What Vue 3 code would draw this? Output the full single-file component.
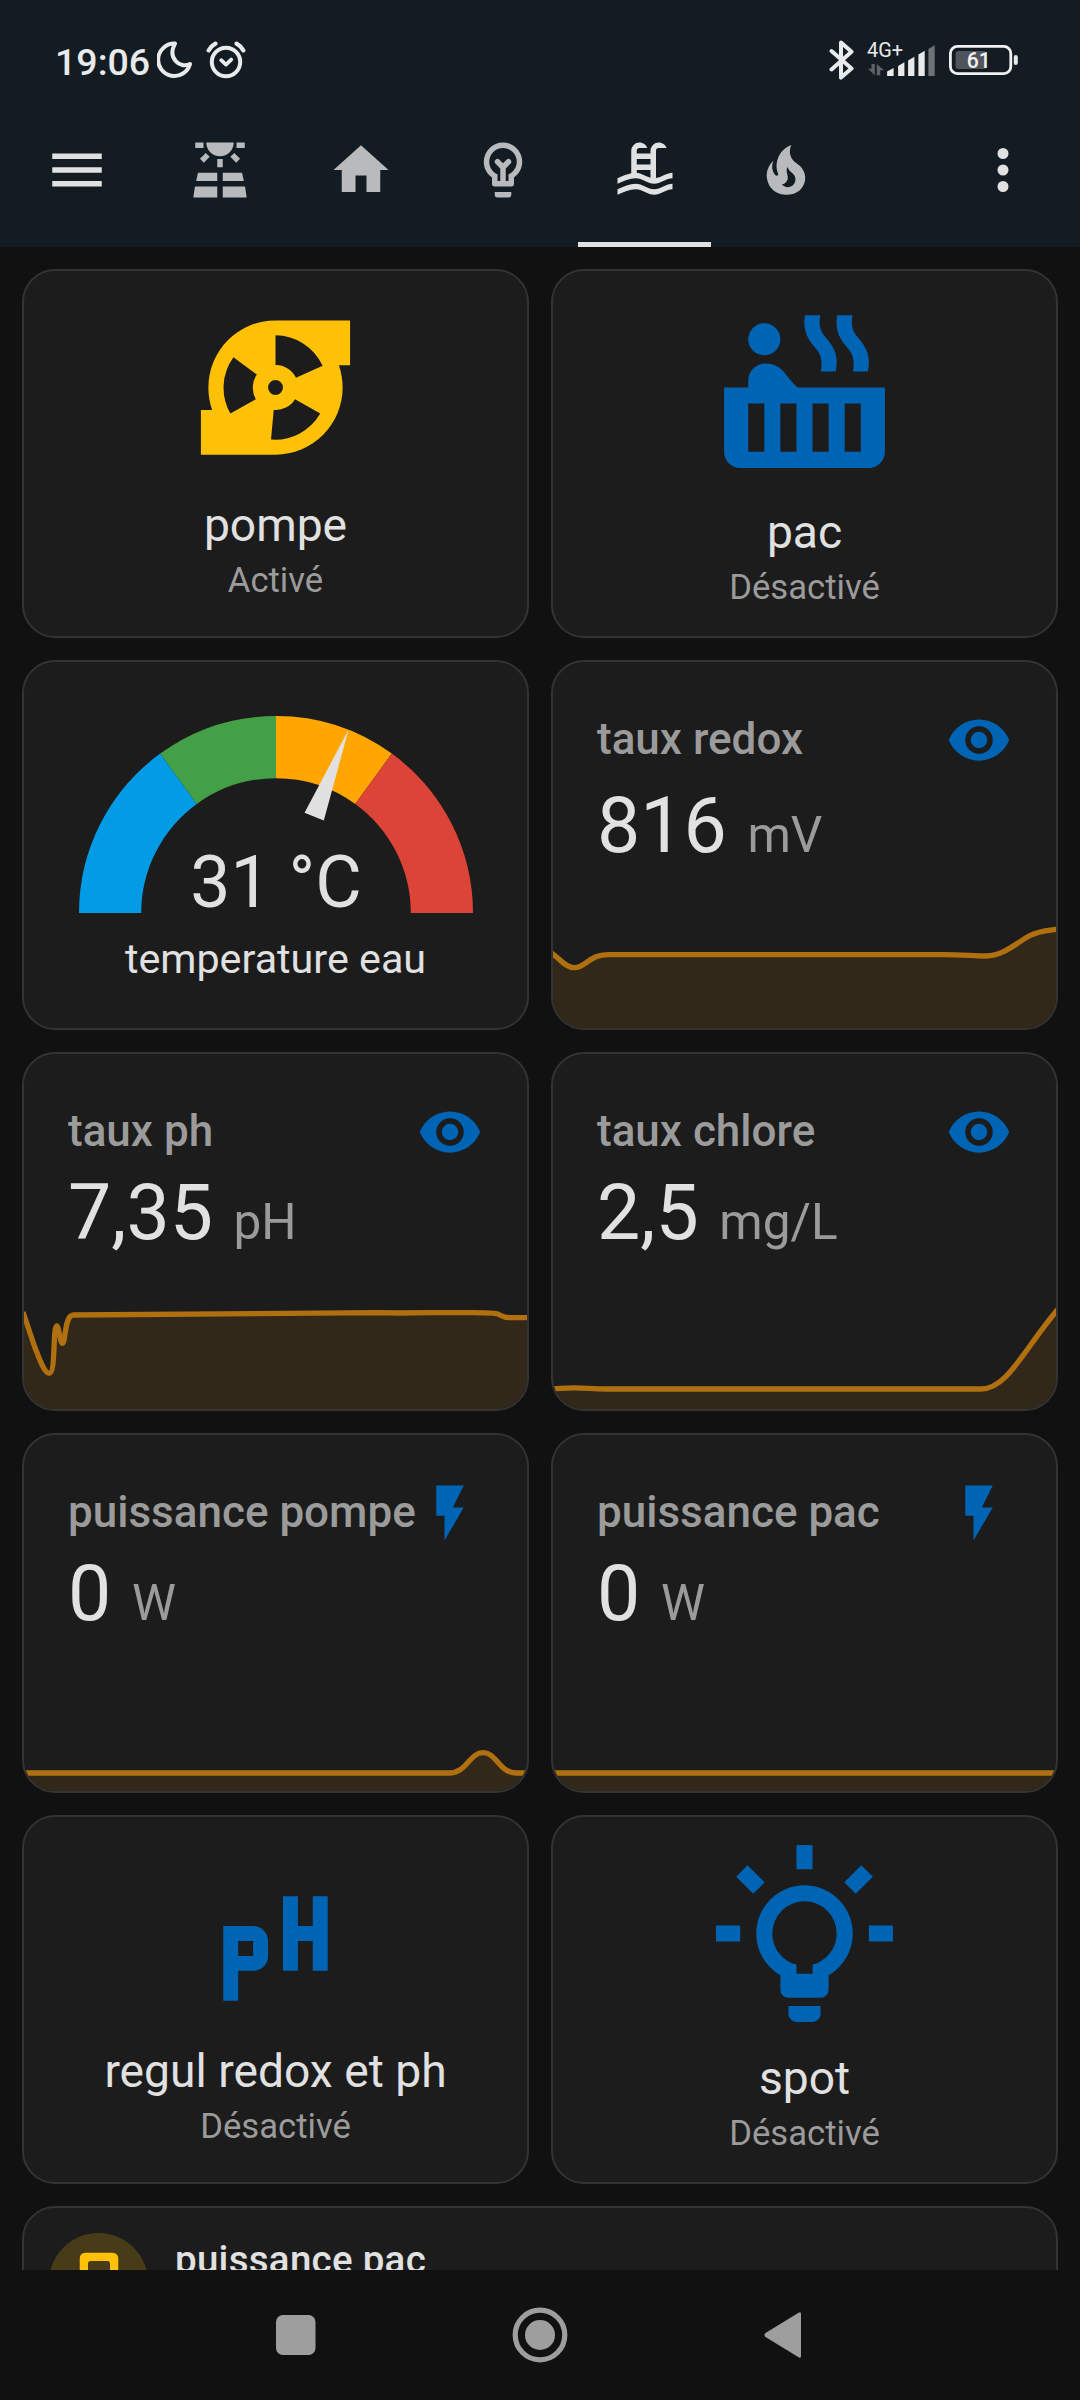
<script setup>
const icons = {
  menu: 'M3,6H21V8H3V6M3,11H21V13H3V11M3,16H21V18H3V16Z',
  solar: 'M3.33 16H11V13H4L3.33 16M13 16H20.67L20 13H13V16M21.11 18H13V22H21.7L21.11 18M2.3 22H11V18H2.89L2.3 22M11 8H13V11H11V8M15.76 7.21L17.18 5.79L19.3 7.91L17.89 9.33L15.76 7.21M4.71 7.91L6.83 5.79L8.24 7.21L6.12 9.33L4.71 7.91M3 2H6V4H3V2M18 2H21V4H18V2M12 7C14.76 7 17 4.76 17 2H7C7 4.76 9.24 7 12 7Z',
  home: 'M10,20V14H14V20H19V12H22L12,3L2,12H5V20H10Z',
  bulb: 'M12,2A7,7 0 0,1 19,9C19,11.38 17.81,13.47 16,14.74V17A1,1 0 0,1 15,18H9A1,1 0 0,1 8,17V14.74C6.19,13.47 5,11.38 5,9A7,7 0 0,1 12,2M9,20H15V21A1,1 0 0,1 14,22H10A1,1 0 0,1 9,21V20M12,4A5,5 0 0,0 7,9C7,11.05 8.23,12.81 10,13.58V16H11V11.42L9.29,9.71A1,1 0 0,1 10.71,8.29L12,9.59L13.29,8.29A1,1 0 0,1 14.71,9.71L13,11.42V16H14V13.58C15.77,12.81 17,11.05 17,9A5,5 0 0,0 12,4Z',
  pool: 'M2,15C3.67,14.25 5.33,13.5 7,13.17V5A3,3 0 0,1 10,2C11.31,2 12.42,2.83 12.83,4H10A1,1 0 0,0 9,5V6H14V5A3,3 0 0,1 17,2C18.31,2 19.42,2.83 19.83,4H17A1,1 0 0,0 16,5V14.94C18,14.62 20,13 22,13V15C19.78,15 17.56,17 15.33,17C13.11,17 10.89,15 8.67,15C6.44,15 4.22,16 2,17V15M14,8H9V10H14V8M14,12H9V13C10.67,13.16 12.33,14.31 14,14.79V12M2,19C4.22,18 6.44,17 8.67,17C10.89,17 13.11,19 15.33,19C17.56,19 19.78,17 22,17V19C19.78,19 17.56,21 15.33,21C13.11,21 10.89,19 8.67,19C6.44,19 4.22,20 2,21V19Z',
  fire: 'M17.66 11.2C17.43 10.9 17.15 10.64 16.89 10.38C16.22 9.78 15.46 9.35 14.82 8.72C13.33 7.26 13 4.85 13.95 3C13 3.23 12.17 3.75 11.46 4.32C8.87 6.4 7.85 10.07 9.07 13.22C9.11 13.32 9.15 13.42 9.15 13.55C9.15 13.77 9 13.97 8.8 14.05C8.57 14.15 8.33 14.09 8.14 13.93C8.08 13.88 8.04 13.83 8 13.76C6.87 12.33 6.69 10.28 7.45 8.64C5.78 10 4.87 12.3 5 14.47C5.06 14.97 5.12 15.47 5.29 15.97C5.43 16.57 5.7 17.17 6 17.7C7.08 19.43 8.95 20.67 10.96 20.92C13.1 21.19 15.39 20.8 17.03 19.32C18.86 17.66 19.5 15 18.56 12.72L18.43 12.46C18.22 12 17.66 11.2 17.66 11.2M14.5 17.5C14.22 17.74 13.76 18 13.4 18.1C12.28 18.5 11.16 17.94 10.5 17.28C11.69 17 12.4 16.12 12.61 15.23C12.78 14.43 12.46 13.77 12.33 13C12.21 12.26 12.23 11.63 12.5 10.94C12.69 11.32 12.89 11.7 13.13 12C13.9 13 15.11 13.44 15.37 14.8C15.41 14.94 15.43 15.08 15.43 15.23C15.46 16.05 15.1 16.95 14.5 17.5Z',
  dots: 'M12,16A2,2 0 0,1 14,18A2,2 0 0,1 12,20A2,2 0 0,1 10,18A2,2 0 0,1 12,16M12,10A2,2 0 0,1 14,12A2,2 0 0,1 12,14A2,2 0 0,1 10,12A2,2 0 0,1 12,10M12,4A2,2 0 0,1 14,6A2,2 0 0,1 12,8A2,2 0 0,1 10,6A2,2 0 0,1 12,4Z',
  pump: 'M2 21V15H3.5C3.18 14.06 3 13.05 3 12A9 9 0 0 1 12 3H22V9H20.5C20.82 9.94 21 10.95 21 12A9 9 0 0 1 12 21H2M12 5V9A3 3 0 0 1 14.75 10.7L18.32 9.09A7 7 0 0 0 12 5M14.62 13.56A3 3 0 0 1 11.76 15L11.4 18.97A7 7 0 0 0 18 15.5L14.62 13.56M9.36 13.56A3.1 3.1 0 0 1 9.5 10.26L6.36 7.94A7 7 0 0 0 5.95 15.5L9.36 13.56M12 11A1 1 0 1 0 12 13A1 1 0 0 0 12 11Z',
  hotTub: 'M7 4A2 2 0 1 1 7 8A2 2 0 0 1 7 4M2 12H5V11.2C5 9.9 6 9 7.2 9C8.1 9 8.8 9.35 9.4 10C9.9 10.7 10.4 11.3 11.15 12H22V20A2 2 0 0 1 20 22H4A2 2 0 0 1 2 20V12M5 14V20H7V14H5M9 14V20H11V14H9M13 14V20H15V14H13M17 14V20H19V14H17M12.05 3H13.96C13.75 4.3 13.95 5 14.7 5.85C15.85 7.2 16.25 8.3 15.87 10H14.05C14.25 8.4 14 7.8 13.2 6.9C12.2 5.7 11.8 4.6 12.05 3M16.05 3H17.96C17.75 4.3 17.95 5 18.7 5.85C19.85 7.2 20.25 8.3 19.87 10H18.05C18.25 8.4 18 7.8 17.2 6.9C16.2 5.7 15.8 4.6 16.05 3Z',
  ph: 'M5 11H9A2 2 0 0 1 11 13V15A2 2 0 0 1 9 17H7V21H5V11M7 13V15H9V13H7M13 7H15V11H17V7H19V17H17V13H15V17H13V7Z',
  spot: 'M20,11H23V13H20V11M1,11H4V13H1V11M13,1V4H11V1H13M4.92,3.5L7.05,5.64L5.63,7.05L3.5,4.93L4.92,3.5M16.95,5.63L19.07,3.5L20.5,4.93L18.37,7.05L16.95,5.63M12,6A6,6 0 0,1 18,12C18,14.22 16.79,16.16 15,17.2V19A1,1 0 0,1 14,20H10A1,1 0 0,1 9,19V17.2C7.21,16.16 6,14.22 6,12A6,6 0 0,1 12,6M14,21V22A1,1 0 0,1 13,23H11A1,1 0 0,1 10,22V21H14M11,17H13V15.87C14.73,15.43 16,13.86 16,12A4,4 0 0,0 12,8A4,4 0 0,0 8,12C8,13.86 9.27,15.43 11,15.87V17Z',
  eye: 'M12,9A3,3 0 0,0 9,12A3,3 0 0,0 12,15A3,3 0 0,0 15,12A3,3 0 0,0 12,9M12,17A5,5 0 0,1 7,12A5,5 0 0,1 12,7A5,5 0 0,1 17,12A5,5 0 0,1 12,17M12,4.5C7,4.5 2.73,7.61 1,12C2.73,16.39 7,19.5 12,19.5C17,19.5 21.27,16.39 23,12C21.27,7.61 17,4.5 12,4.5Z',
  flash: 'M7,2V13H10V22L17,10H13L17,2H7Z',
  meter: 'M7 1H17A2 2 0 0 1 19 3V21H5V3A2 2 0 0 1 7 1M9 4A1 1 0 0 0 8 5V16H16V5A1 1 0 0 0 15 4H9Z'
}

const tabs = ['solar', 'home', 'bulb', 'pool', 'fire']

const cards = [
  { type: 'button', icon: 'pump', name: 'pompe', state: 'Activé', on: true },
  { type: 'button', icon: 'hotTub', name: 'pac', state: 'Désactivé', big: true },
  { type: 'gauge', name: 'temperature eau', value: '31 °C' },
  {
    type: 'sensor', icon: 'eye', name: 'taux redox', value: '816', unit: 'mV', low: true,
    line: 'M-2 44.5L0 46C8 52 13 59.7 21.4 59.7C33 59.7 35 46.7 56 46.7H390C410 46.7 420 48 433 48C450 48 465 34 476 28C486 22.8 494 22.5 503 21.3H506'
  },
  {
    type: 'sensor', icon: 'eye', name: 'taux ph', value: '7,35', unit: 'pH',
    line: 'M-1 23L0 26L10.4 57C14 66 20 84.3 25.2 84.3C32 84.3 28.5 37 32.8 37C35 37 36 54.3 38.3 54.3C42 54.3 40 26.5 49.3 26L354.8 23.6L375 24L405 23.6L440 23.6C460 23.8 470 23.6 474 25C478 27 479 28.6 486 28.7H506'
  },
  {
    type: 'sensor', icon: 'eye', name: 'taux chlore', value: '2,5', unit: 'mg/L',
    line: 'M-2 99.7C8 99.4 12 98.9 21.4 98.9C32 98.9 40 100 52.4 100H427.8C454 100 470 62 503 22.5L506 19'
  },
  {
    type: 'sensor', icon: 'flash', name: 'puissance pompe', value: '0', unit: 'W',
    line: 'M-2 102H425C443 102 445 81.7 459.1 81.7C473 81.7 475 102 492.5 102H506'
  },
  { type: 'sensor', icon: 'flash', name: 'puissance pac', value: '0', unit: 'W', line: 'M-2 102H506' },
  { type: 'button', icon: 'ph', name: 'regul redox et ph', state: 'Désactivé' },
  { type: 'button', icon: 'spot', name: 'spot', state: 'Désactivé', big: true }
]

// Gauge segments, in percent of the half circle
const segments = [
  { from: 0, to: 30, color: '#039be5' },
  { from: 30, to: 50, color: '#43a047' },
  { from: 50, to: 70, color: '#ffa600' },
  { from: 70, to: 100, color: '#db4437' }
]
const needleAngle = 111.6

function arc({ from, to }) {
  const point = (p) => {
    const a = (p / 100) * Math.PI
    return `${(-40 * Math.cos(a)).toFixed(3)} ${(-40 * Math.sin(a)).toFixed(3)}`
  }
  return `M${point(from)}A40 40 0 0 1 ${point(to)}`
}
</script>

<template>
  <div class="screen">
    <header class="top">
      <div class="status">
        <div class="status-left">
          <span class="time">19:06</span>
          <svg class="moon" width="36" height="38" viewBox="0 0 36 38">
            <path d="M18 2.6A16.2 16.2 0 1 0 33 23C23 28 10 17 18 2.6Z" fill="none" stroke="#e8eaeb" stroke-width="4" stroke-linejoin="round" />
          </svg>
          <svg class="alarm" width="40" height="38" viewBox="0 0 40 38">
            <g fill="none" stroke="#e8eaeb" stroke-linecap="round" stroke-linejoin="round">
              <circle cx="20" cy="21" r="14.2" stroke-width="4" />
              <path d="M15.2 19.2L20 23.6L25.2 18.6" stroke-width="3.8" />
              <path d="M2.6 9.4Q5 5 9.4 2.6M30.6 2.6Q35 5 37.4 9.4" stroke-width="4.2" />
            </g>
          </svg>
        </div>
        <div class="status-right">
          <svg width="26" height="40" viewBox="0 0 26 40">
            <path d="M2.5 11L22.5 28.5L12 37.6V2.4L22.5 11.7L2.5 29.5" fill="none" stroke="#e8eaeb" stroke-width="4" stroke-linecap="round" stroke-linejoin="round" />
          </svg>
          <svg class="signal" width="70" height="40" viewBox="0 0 70 40">
            <text x="0" y="17" font-size="19.5" textLength="36" lengthAdjust="spacingAndGlyphs" fill="#e8eaeb">4G+</text>
            <g fill="#e8eaeb">
              <path d="M20.1 31.5L26.6 28V36H20.1Z" />
              <path d="M31.1 26L37.4 22.3V36H31.1Z" />
              <path d="M41.1 20.5L47.4 16.7V36H41.1Z" />
              <path d="M51.4 14.5L57.7 10.7V36H51.4Z" />
            </g>
            <path d="M61.4 9L67.7 5.3V36H61.4Z" fill="#6d7276" />
            <path d="M4.5 24H7.8V35.3L1 28.8H4.5ZM9.8 35.3V24L17 30.3H13.2V35.3Z" fill="#5d6367" />
          </svg>
          <svg class="battery" width="72" height="32" viewBox="0 0 72 32">
            <rect x="6.6" y="7" width="30.6" height="18" rx="3" fill="#4f555b" />
            <rect x="1.4" y="2.4" width="60.4" height="27.2" rx="7" fill="none" stroke="#f0f1f2" stroke-width="2.8" />
            <rect x="64.8" y="11" width="4" height="10" rx="2" fill="#e8eaeb" />
            <text x="29.8" y="24.2" font-size="22.5" font-weight="500" text-anchor="middle" textLength="24" lengthAdjust="spacingAndGlyphs" fill="#f0f1f2">61</text>
          </svg>
        </div>
      </div>
      <nav class="toolbar">
        <svg class="icon bright" viewBox="0 0 24 24"><path :d="icons.menu" /></svg>
        <div class="tabs">
          <div v-for="tab in tabs" :key="tab" class="tab" :class="{ active: tab === 'pool' }">
            <svg class="icon" viewBox="0 0 24 24"><path :d="icons[tab]" /></svg>
          </div>
        </div>
        <svg class="icon bright" viewBox="0 0 24 24"><path :d="icons.dots" /></svg>
      </nav>
    </header>

    <main class="content">
      <div class="grid">
        <section v-for="card in cards" :key="card.name" class="card" :class="card.type">
          <template v-if="card.type === 'button'">
            <svg class="button-icon" :class="{ on: card.on, big: card.big }" viewBox="0 0 24 24">
              <path :d="icons[card.icon]" />
            </svg>
            <div class="button-name">{{ card.name }}</div>
            <div class="button-state">{{ card.state }}</div>
          </template>

          <template v-else-if="card.type === 'gauge'">
            <svg class="dial" viewBox="-47.5 -47.5 95 47.5">
              <path v-for="s in segments" :key="s.from" :d="arc(s)" :stroke="s.color" fill="none" stroke-width="15" />
              <path d="M-25 -2.5L-47.5 0L-25 2.5Z" fill="#e1e1e1" :transform="`rotate(${needleAngle})`" />
              <text x="0" y="-1.4" text-anchor="middle" font-size="17.25" fill="#e1e1e1">{{ card.value }}</text>
            </svg>
            <div class="gauge-name">{{ card.name }}</div>
          </template>

          <template v-else>
            <div class="head">
              <span class="sensor-name">{{ card.name }}</span>
              <svg class="icon" viewBox="0 0 24 24"><path :d="icons[card.icon]" /></svg>
            </div>
            <div class="reading" :class="{ low: card.low }">{{ card.value }} <span class="unit">{{ card.unit }}</span></div>
            <svg class="chart" viewBox="0 0 503 120">
              <path class="area" :d="card.line + 'V120H-2Z'" />
              <path class="line" :d="card.line" />
            </svg>
          </template>
        </section>

        <section class="card tile">
          <div class="badge">
            <svg class="icon" viewBox="0 0 24 24"><path :d="icons.meter" /></svg>
          </div>
          <span class="tile-name">puissance pac</span>
        </section>
      </div>
    </main>

    <footer class="navbar">
      <svg width="40" height="40" viewBox="0 0 40 40"><rect width="39.5" height="40" rx="7" /></svg>
      <svg width="56" height="56" viewBox="0 0 56 56">
        <circle cx="28" cy="28" r="24.8" fill="none" stroke="#9e9e9e" stroke-width="5.2" />
        <circle cx="28" cy="28" r="15" />
      </svg>
      <svg width="38" height="46" viewBox="0 0 38 46"><path d="M35 .6Q37 -.5 37 2V44Q37 46.5 35 45.4L1.5 25Q-.5 23 1.5 21Z" /></svg>
    </footer>
  </div>
</template>

<style>
body {
  margin: 0;
  background: #111111;
}
</style>

<style scoped>
.screen {
  width: 1080px;
  height: 2400px;
  display: flex;
  flex-direction: column;
  overflow: hidden;
  background: #111111;
  color: #e1e1e1;
  font-family: Roboto, "Liberation Sans", sans-serif;
}

svg {
  display: block;
  flex: none;
}

.icon {
  width: 66px;
  height: 66px;
  fill: currentColor;
}

.top {
  height: 247px;
  flex: none;
  background: #141c23;
}

.status {
  height: 93px;
  box-sizing: border-box;
  padding: 27px 59px 0 54px;
  display: flex;
  justify-content: space-between;
}

.status-left,
.status-right {
  height: 66px;
  display: flex;
  align-items: center;
}

.time {
  font-size: 37.5px;
  font-weight: 500;
  line-height: 45px;
  padding: 4px 0 0 1px;
  width: 102px;
  color: #e8eaeb;
}

.alarm {
  margin-left: 13px;
}

.signal {
  margin-left: 12px;
}

.battery {
  margin-left: 12px;
}

.toolbar {
  height: 154px;
  display: flex;
  align-items: center;
  padding: 0 44px;
}

.bright {
  color: #e1e1e1;
}

.tabs {
  flex: 1;
  height: 100%;
  display: flex;
  padding-left: 43.5px;
}

.tab {
  flex: none;
  width: 132.8px;
  margin-right: 8.8px;
  height: 100%;
  box-sizing: border-box;
  border-bottom: 5px solid transparent;
  padding-top: 5px;
  display: flex;
  align-items: center;
  justify-content: center;
  color: #b8babc;
}

.tab.active {
  color: #e1e1e1;
  border-bottom-color: #e1e1e1;
}

.content {
  flex: 1;
  min-height: 0;
  overflow: hidden;
  padding: 22px 22.5px 0 22px;
}

.grid {
  display: grid;
  grid-template-columns: 507px 507px;
  column-gap: 22px;
  row-gap: 22px;
  grid-template-rows: 369px 370px 359px 360px 369px 154px;
}

.card {
  box-sizing: border-box;
  border: 2px solid #333333;
  border-radius: 33px;
  background: #1c1c1c;
  overflow: hidden;
  display: flex;
  flex-direction: column;
  white-space: nowrap;
}

.button {
  align-items: center;
  justify-content: center;
  padding-bottom: 10px;
}

.button-icon {
  width: 179px;
  height: 179px;
  fill: #0064b4;
}

.button-icon.big {
  width: 193px;
  height: 193px;
}

.button-icon.on {
  fill: #ffc107;
}

.button-name {
  margin-top: 21px;
  font-size: 46.2px;
  line-height: 54px;
}

.button-state {
  margin-top: 8px;
  font-size: 34.65px;
  line-height: 40px;
  color: #9b9b9b;
}

.gauge {
  align-items: center;
}

.dial {
  width: 394px;
  height: 197px;
  margin-top: 54px;
  overflow: visible;
}

.gauge-name {
  margin-top: 21.5px;
  font-size: 41.25px;
  line-height: 48px;
}

.head {
  margin: 45px 44px 0;
  height: 66px;
  display: flex;
  justify-content: space-between;
  color: #0064b4;
}

.sensor-name {
  font-size: 44px;
  font-weight: 500;
  line-height: 64px;
  color: #9b9b9b;
}

.reading {
  margin: 10px 44px 0;
  font-size: 77px;
  line-height: 77px;
}

.reading.low {
  margin-top: 15px;
}

.unit {
  margin-left: 1.5px;
  font-size: 49.5px;
  line-height: 1;
  color: #9b9b9b;
}

.chart {
  width: 503px;
  height: 120px;
  margin-top: auto;
}

.area {
  fill: #32281a;
}

.line {
  fill: none;
  stroke: #b0700f;
  stroke-width: 5.3;
}

.tile {
  grid-column: 1 / -1;
  flex-direction: row;
  align-items: flex-start;
  padding: 25px;
}

.badge {
  width: 99px;
  height: 99px;
  border-radius: 50%;
  background: #483c18;
  color: #ffc107;
  display: flex;
  align-items: center;
  justify-content: center;
}

.tile-name {
  margin: 2px 0 0 27px;
  font-size: 38.5px;
  font-weight: 500;
  line-height: 50px;
  letter-spacing: 0.275px;
}

.navbar {
  height: 130px;
  flex: none;
  display: flex;
  align-items: center;
  justify-content: space-between;
  padding: 0 278px 0 276px;
  box-sizing: border-box;
  background: #111111;
  fill: #9e9e9e;
}
</style>
